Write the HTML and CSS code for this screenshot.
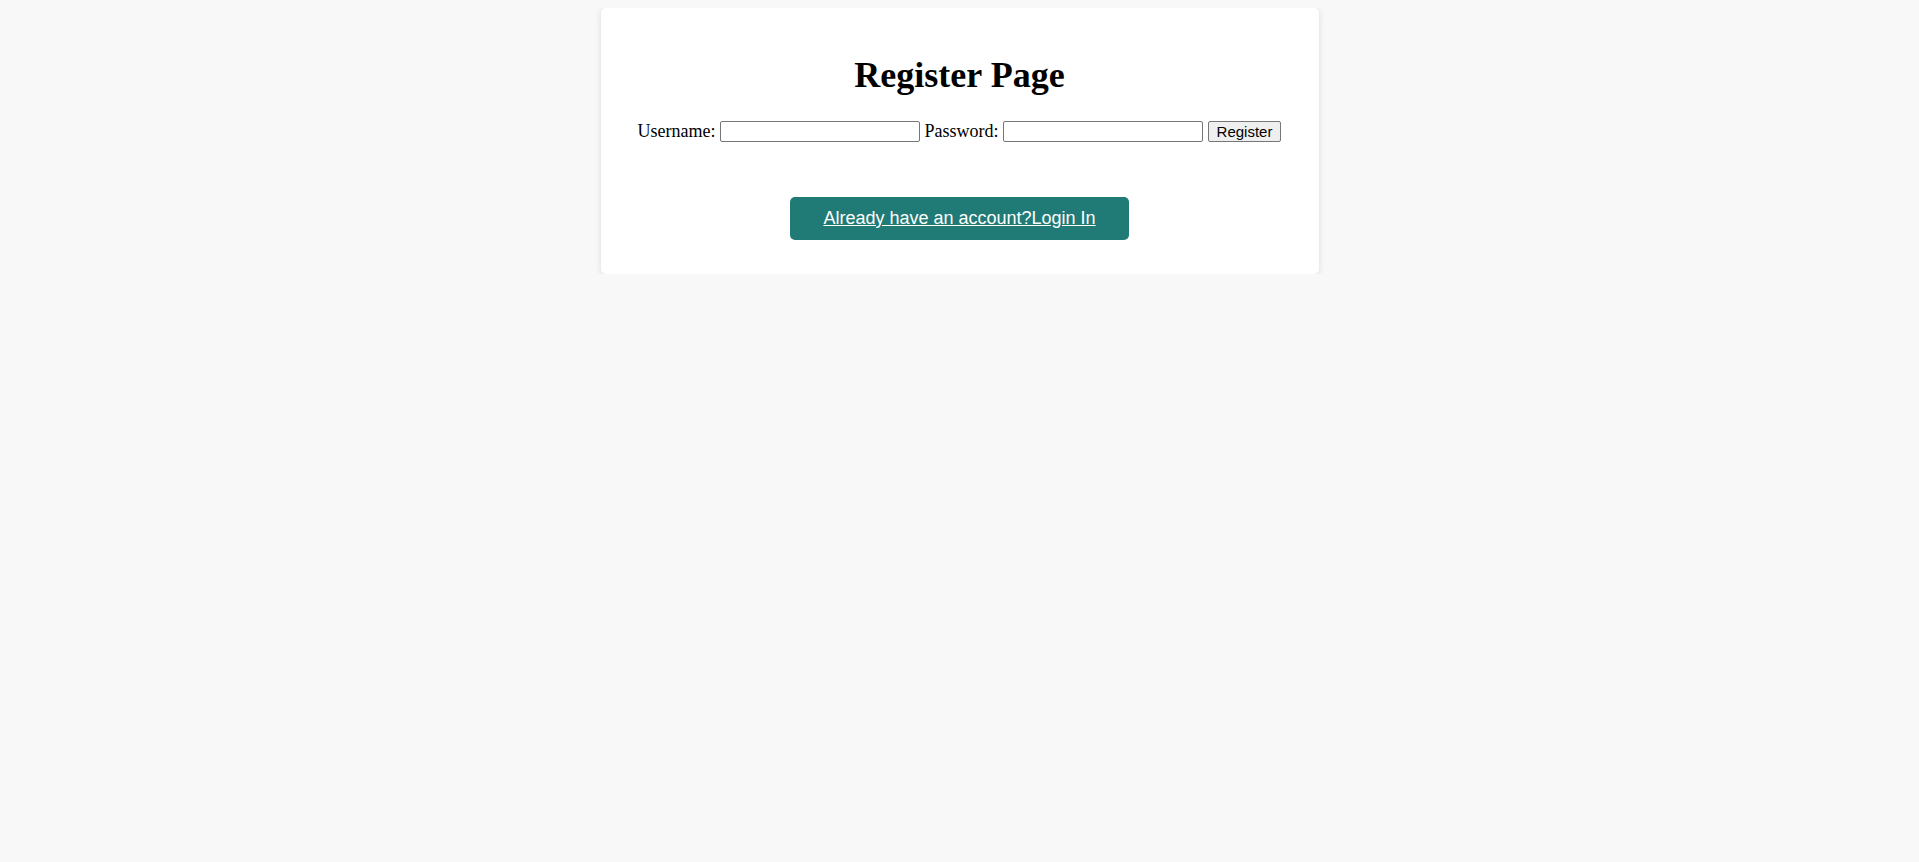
FILE: index.html
```html
<!DOCTYPE html>
<html lang="en">
<head>
<meta charset="utf-8">
<title>Register Page</title>
<link rel="stylesheet" href="styles.css">
</head>
<body>
<div class="card">
  <h1 class="title">Register Page</h1>
  <form class="form">
    <label class="label" for="u">Username:</label> <input class="field" id="u" type="text"> <label class="label" for="p">Password:</label> <input class="field" id="p" type="password"> <button class="submit" type="button">Register</button>
  </form>
  <div class="switch">
    <a class="login-link" href="#">Already have an account?Login In</a>
  </div>
</div>
</body>
</html>
```
FILE: styles.css
```css
html, body {
  background: #f8f8f8;
}
body {
  margin: 8px;
  font-family: "Liberation Serif", "Times New Roman", serif;
  font-size: 18px;
  color: #000;
}
.card {
  width: 718px;
  margin: 0 auto;
  box-sizing: border-box;
  background: #fff;
  border-radius: 5px;
  box-shadow: 0 1px 6px rgba(0, 0, 0, 0.12);
  padding: 28px 20px 34px;
  text-align: center;
}
.title {
  font-size: 36px;
  font-weight: bold;
  margin: 18px 0 25px;
}
.form {
  margin: 0;
  line-height: 21px;
}
.field {
  box-sizing: border-box;
  width: 200px;
  height: 21px;
  padding: 1px 2px;
  border: 1px solid #767676;
  border-radius: 2px;
  font-family: "Liberation Sans", Arial, sans-serif;
  font-size: 15px;
  background: #fff;
  vertical-align: bottom;
}
.submit {
  box-sizing: border-box;
  height: 21px;
  padding: 0 8px;
  border: 1px solid #767676;
  border-radius: 2px;
  background: #efefef;
  font-family: "Liberation Sans", Arial, sans-serif;
  font-size: 15px;
  line-height: 19px;
  color: #000;
  vertical-align: bottom;
}
.switch {
  margin-top: 55px;
}
.login-link {
  display: inline-block;
  padding: 11px 33px;
  background: #207a76;
  color: #fff;
  border-radius: 5px;
  font-family: "Liberation Sans", Arial, sans-serif;
  font-size: 18px;
  line-height: 21px;
  text-decoration: underline;
}
```
